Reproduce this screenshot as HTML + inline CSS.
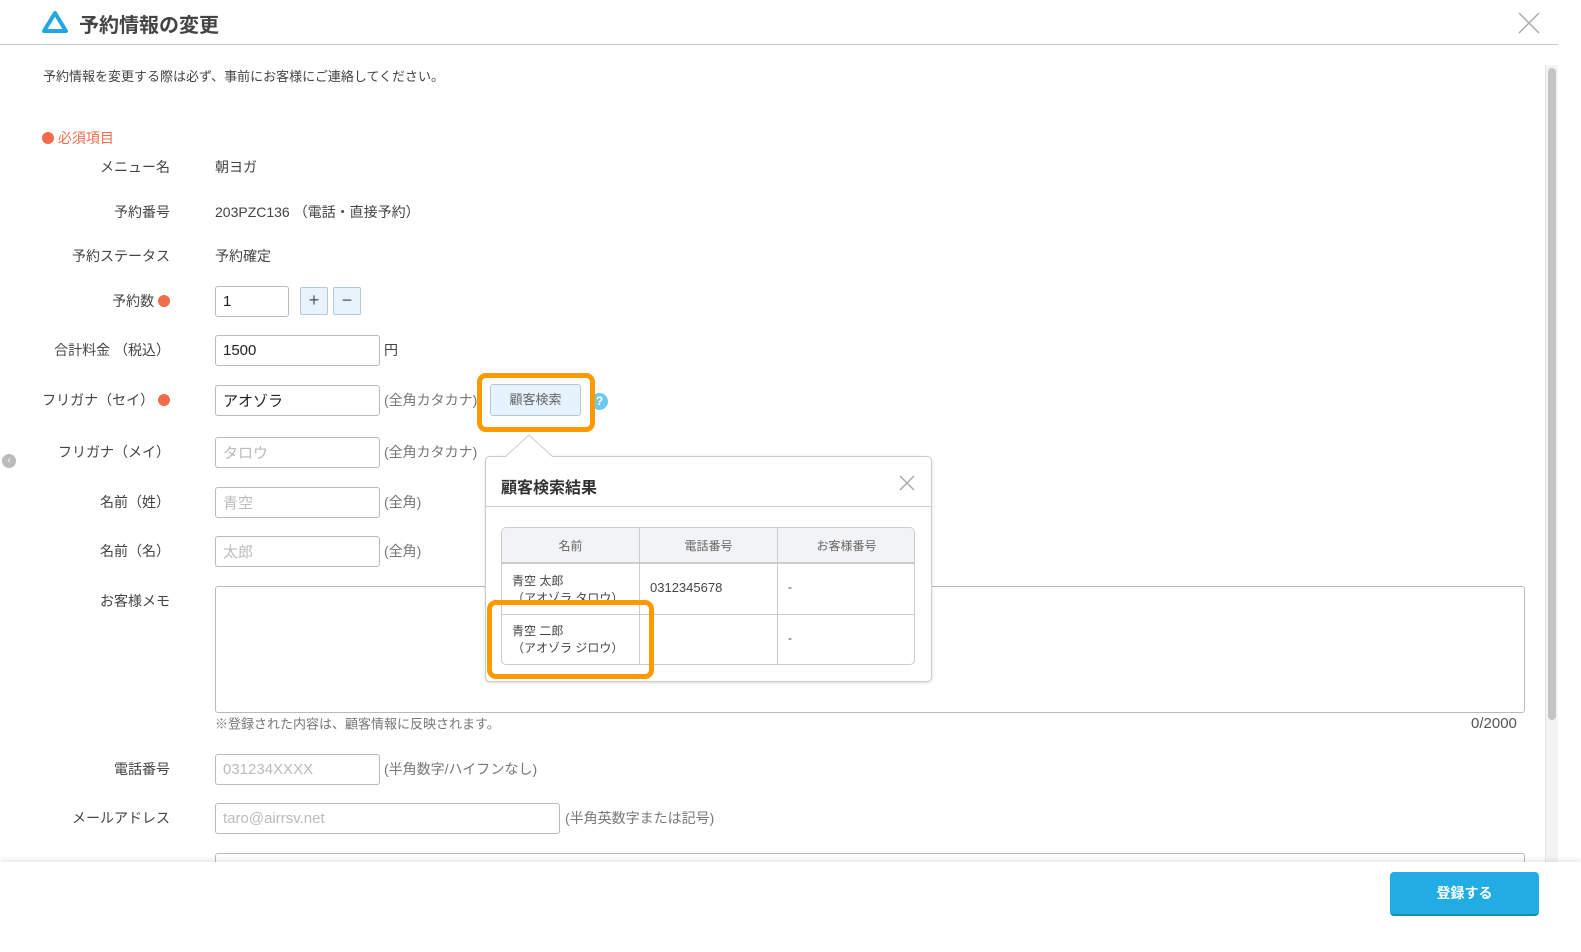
<!DOCTYPE html>
<html><head><meta charset="utf-8"><style>
*{box-sizing:border-box}
body{margin:0;width:1581px;height:952px;overflow:hidden;background:#fff;font-family:"Liberation Sans","Noto Sans CJK JP",sans-serif;color:#333;position:relative;font-size:14px}
.a{position:absolute}
.lbl{position:absolute;right:1411px;white-space:nowrap;font-size:14px;color:#444;transform:translateY(-50%)}
.val{position:absolute;left:215px;transform:translateY(-50%);white-space:nowrap;color:#444}
.in{position:absolute;border:1px solid #bbb;border-radius:3px;background:#fff;padding-left:7px;font-size:15px;color:#222;display:flex;align-items:center}
.ph{color:#bbb}
.note{position:absolute;color:#777;font-size:14px;transform:translateY(-50%);white-space:nowrap}
.dot{display:inline-block;width:12px;height:12px;border-radius:50%;background:#f26b4b;vertical-align:-1px}
.sb{position:absolute;width:28px;height:28px;border:1px solid #b5c8d8;background:#e8f3fc;border-radius:2px;text-align:center;line-height:25px;font-size:18px;color:#555}
</style></head><body>
<!-- header -->
<svg class="a" style="left:41px;top:10px" width="28" height="25" viewBox="0 0 28 25"><path d="M14 3 L25 21 L3 21 Z" fill="none" stroke="#21a8e0" stroke-width="4" stroke-linejoin="round"/></svg>
<div class="a" style="left:79px;top:9px;font-size:20px;font-weight:bold;color:#444">予約情報の変更</div>
<svg class="a" style="left:1518px;top:12px" width="22" height="22"><path d="M1 1L21 21M21 1L1 21" stroke="#aaa" stroke-width="1.5"/></svg>
<div class="a" style="left:0;top:44px;width:1558px;height:1px;background:#c8c8c8"></div>
<!-- scrollbar -->
<div class="a" style="left:1545px;top:65px;width:13px;height:797px;background:#f4f4f4;border-left:1px solid #e4e4e4"></div>
<div class="a" style="left:1548px;top:68px;width:8px;height:652px;background:#c4c4c4;border-radius:4px"></div>
<div class="a" style="left:2px;top:454px;width:14px;height:14px;border-radius:50%;background:#bbb;color:#fff;font-size:10px;text-align:center;line-height:14px">‹</div>

<div class="a" style="left:43px;top:66px;font-size:13px;color:#444">予約情報を変更する際は必ず、事前にお客様にご連絡してください。</div>
<div class="a" style="left:42px;top:128px;font-size:14px;color:#f26b4b"><span class="dot"></span> 必須項目</div>

<div class="lbl" style="top:167px">メニュー名</div><div class="val" style="top:167px">朝ヨガ</div>
<div class="lbl" style="top:212px">予約番号</div><div class="val" style="top:212px">203PZC136 （電話・直接予約）</div>
<div class="lbl" style="top:256px">予約ステータス</div><div class="val" style="top:256px">予約確定</div>
<div class="lbl" style="top:301px">予約数 <span class="dot"></span></div>
<div class="in" style="left:215px;top:286px;width:74px;height:31px">1</div>
<div class="sb" style="left:300px;top:287px">+</div><div class="sb" style="left:333px;top:287px">−</div>
<div class="lbl" style="top:350px">合計料金 （税込）</div>
<div class="in" style="left:215px;top:335px;width:165px;height:31px">1500</div><div class="note" style="left:384px;top:350px;color:#444">円</div>
<div class="lbl" style="top:400px">フリガナ（セイ） <span class="dot"></span></div>
<div class="in" style="left:215px;top:385px;width:165px;height:31px">アオゾラ</div><div class="note" style="left:384px;top:400px">(全角カタカナ)</div>
<div class="lbl" style="top:452px">フリガナ（メイ）</div>
<div class="in ph" style="left:215px;top:437px;width:165px;height:31px">タロウ</div><div class="note" style="left:384px;top:452px">(全角カタカナ)</div>
<div class="lbl" style="top:502px">名前（姓）</div>
<div class="in ph" style="left:215px;top:487px;width:165px;height:31px">青空</div><div class="note" style="left:384px;top:502px">(全角)</div>
<div class="lbl" style="top:551px">名前（名）</div>
<div class="in ph" style="left:215px;top:536px;width:165px;height:31px">太郎</div><div class="note" style="left:384px;top:551px">(全角)</div>
<div class="lbl" style="top:601px">お客様メモ</div>
<div class="a" style="left:215px;top:586px;width:1310px;height:127px;border:1px solid #bbb;border-radius:3px"></div>
<div class="note" style="left:215px;top:723px;font-size:13px">※登録された内容は、顧客情報に反映されます。</div>
<div class="a" style="left:1471px;top:715px;color:#555;font-size:15px">0/2000</div>
<div class="lbl" style="top:769px">電話番号</div>
<div class="in ph" style="left:215px;top:754px;width:165px;height:31px">031234XXXX</div><div class="note" style="left:384px;top:769px">(半角数字/ハイフンなし)</div>
<div class="lbl" style="top:818px">メールアドレス</div>
<div class="in ph" style="left:215px;top:803px;width:345px;height:31px">taro@airrsv.net</div><div class="note" style="left:565px;top:818px">(半角英数字または記号)</div>
<div class="a" style="left:215px;top:853px;width:1310px;height:20px;border:1px solid #bbb;border-radius:3px"></div>

<!-- footer -->
<div class="a" style="left:0;top:862px;width:1581px;height:90px;background:#fff;box-shadow:0 -3px 5px rgba(0,0,0,0.08)"></div>
<div class="a" style="left:1390px;top:872px;width:149px;height:44px;background:#21ade3;border-radius:4px;border-bottom:2px solid #1a8cba;color:#fff;text-align:center;line-height:42px;font-size:14px;font-weight:bold">登録する</div>

<!-- search button + popup -->
<div class="a" style="left:490px;top:384px;width:91px;height:32px;background:#e6f3fc;border:1px solid #b5c8d8;border-radius:3px;text-align:center;line-height:30px;font-size:13px;color:#666">顧客検索</div>
<div class="a" style="left:591px;top:393px;width:17px;height:17px;border-radius:50%;background:#6cc8ef;color:#fff;font-size:12px;font-weight:bold;text-align:center;line-height:17px">?</div>
<div class="a" style="left:477px;top:373px;width:118px;height:59px;border:5px solid #ff9900;border-radius:9px"></div>
<div class="a" style="left:485px;top:456px;width:447px;height:226px;border:1px solid #ccc;border-radius:5px;background:#fff;box-shadow:0 1px 3px rgba(0,0,0,.15)"></div>
<svg class="a" style="left:505px;top:434px" width="50" height="24"><path d="M0 23 L24 1 L48 23" fill="#fff" stroke="#ccc"/></svg>
<div class="a" style="left:501px;top:474px;font-size:16px;font-weight:bold;color:#333">顧客検索結果</div>
<svg class="a" style="left:899px;top:475px" width="16" height="16"><path d="M1 1L15 15M15 1L1 15" stroke="#aaa" stroke-width="1.5"/></svg>
<div class="a" style="left:486px;top:506px;width:445px;height:1px;background:#ccc"></div>
<div class="a" style="left:501px;top:527px;width:414px;height:138px;border:1px solid #ccc;border-radius:5px;overflow:hidden;font-size:12px;color:#444">
 <div class="a" style="left:0;top:0;width:414px;height:36px;background:#f2f3f5;border-bottom:2px solid #ccc"></div>
 <div class="a" style="left:137px;top:0;width:1px;height:138px;background:#ccc"></div>
 <div class="a" style="left:275px;top:0;width:1px;height:138px;background:#ccc"></div>
 <div class="a" style="left:0;top:86px;width:414px;height:1px;background:#ccc"></div>
 <div class="a" style="left:0;top:9px;width:137px;text-align:center;color:#666">名前</div>
 <div class="a" style="left:138px;top:9px;width:137px;text-align:center;color:#666">電話番号</div>
 <div class="a" style="left:276px;top:9px;width:137px;text-align:center;color:#666">お客様番号</div>
 <div class="a" style="left:10px;top:45px;line-height:17px">青空 太郎<br>（アオゾラ タロウ）</div>
 <div class="a" style="left:148px;top:52px;font-size:13px">0312345678</div>
 <div class="a" style="left:286px;top:52px">-</div>
 <div class="a" style="left:10px;top:95px;line-height:17px">青空 二郎<br>（アオゾラ ジロウ）</div>
 <div class="a" style="left:286px;top:103px">-</div>
</div>
<div class="a" style="left:487px;top:600px;width:167px;height:79px;border:5px solid #ff9900;border-radius:9px"></div>
</body></html>
